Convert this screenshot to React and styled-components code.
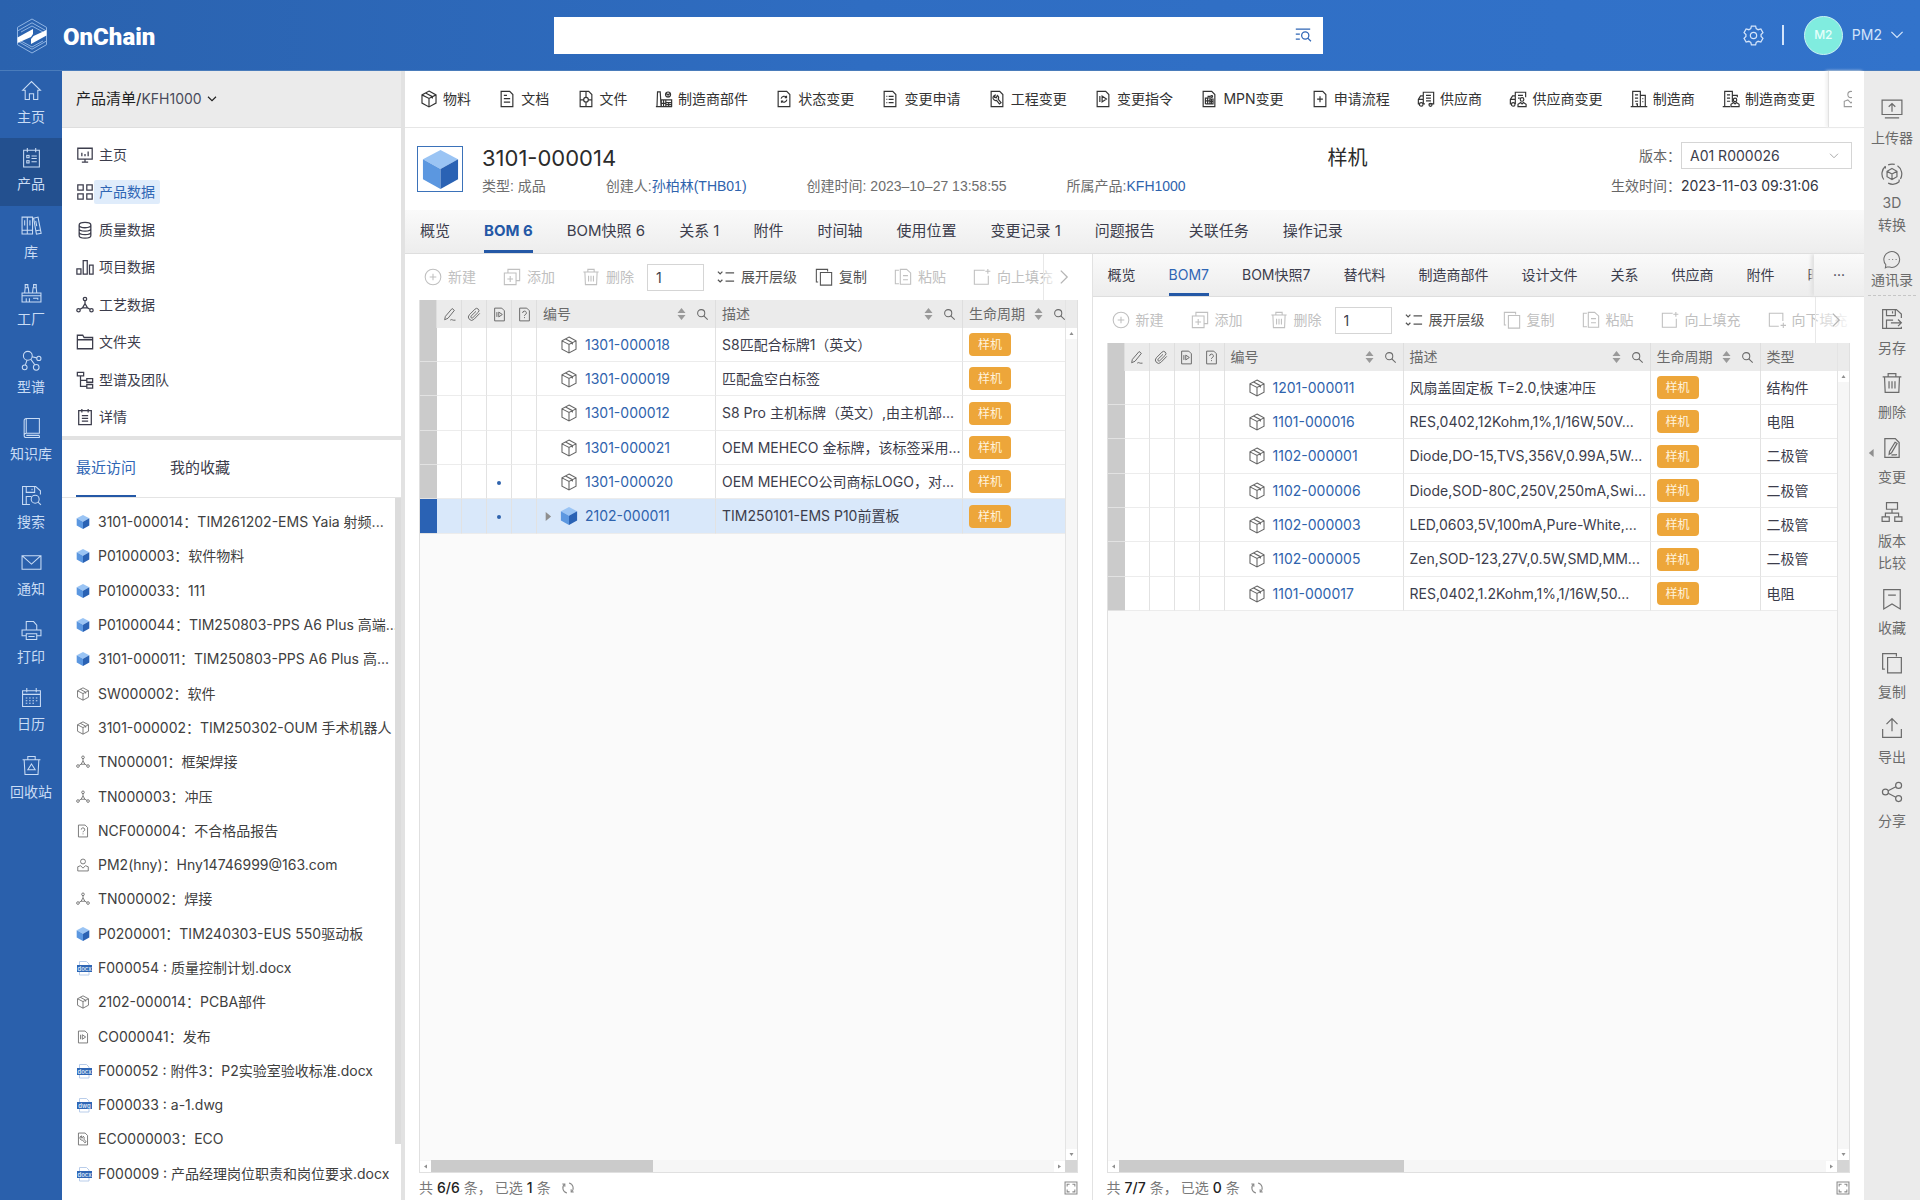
// App.jsx
import React from "react";
import styled, { createGlobalStyle } from "styled-components";

const GlobalStyle = createGlobalStyle`
  * {
    box-sizing: border-box;
  }

  body {
    margin: 0;
    background: #fff;
    color: #3c3d4c;
    font-family: Inter, "Noto Sans CJK SC", sans-serif;
    font-size: 14px;
    line-height: 20px;
  }

  ul {
    list-style: none;
    margin: 0;
    padding: 0;
  }

  button,
  input,
  select {
    font: inherit;
    color: inherit;
  }

  button {
    background: none;
    border: 0;
    padding: 0;
  }

  a {
    color: inherit;
    text-decoration: none;
  }
`;

/* ---------- icons ---------- */

const page = <path d="M3.5 1.5h9.5l3.5 3.5v13.5h-13z" />;

const ICONS = {
  cube: (
    <path d="M10 1.2l7.8 4.2v9.2L10 18.8l-7.8-4.2V5.4zM2.2 5.4L10 9.4l7.8-4M10 9.4v9.4M6.2 3.3l7.6 4.1v2" />
  ),
  docText: (
    <>
      {page}
      <path d="M6.5 6H10M6.5 9.5h7M6.5 13.5h7" />
    </>
  ),
  docFile: (
    <>
      {page}
      <path d="M10 1.5v6.5M10 13.5v5M3.5 11h4M12.5 11h4" />
      <circle cx="10" cy="10.8" r="2.6" />
    </>
  ),
  part: (
    <>
      <path d="M1 18.5h18M2.2 18.5L2.8 2h3l1 16.5M7 18.5V11h5v7.5M12 14h6.5v4.5M9.5 11v7.5M15.2 14v4.5M7 14.8h5M12 16.2h6.5M12 11h6.5v3" />
      <circle cx="14.5" cy="5" r="2.8" />
      <path d="M14.5 5v3M12 4l2.5 1L17 4" />
    </>
  ),
  docSync: (
    <>
      {page}
      <path d="M6.8 9.5A3.4 3.4 0 0 1 12.8 8.3M13.2 10.8a3.4 3.4 0 0 1-6 1.5M12.8 6.5v2h-2M7.2 14.2v-2h2" />
    </>
  ),
  docList: (
    <>
      {page}
      <path d="M6 7h1M8.5 7H14M6 10.5h1M8.5 10.5H14M6 14h1M8.5 14H14" />
    </>
  ),
  docWrench: (
    <>
      {page}
      <path d="M8 5.5a3.2 3.2 0 0 0-2.2 4.3A3.2 3.2 0 0 0 9.5 11.6l3.2 3.9 1.8-1.5-3.2-3.8A3.2 3.2 0 0 0 10.4 6L9.2 8.6 7.3 8.2z" />
    </>
  ),
  docPlay: (
    <>
      {page}
      <path d="M6.5 6.8v6.4M9 6.8v6.4l4.8-3.2z" />
    </>
  ),
  docMpn: (
    <>
      {page}
      <path d="M6 15.5V9h3V7h2v8.5M6 15.5h8.5V10H11M6 12h5M11 12.7h3.5M8.5 9v6.5M12.7 10v5.5" />
      <circle cx="13" cy="7.3" r="1" />
    </>
  ),
  docPlus: (
    <>
      {page}
      <path d="M10 7v6.5M6.8 10.2h6.4" />
    </>
  ),
  docHelp: (
    <>
      {page}
      <path d="M7.5 8a2.5 2.5 0 1 1 3.4 2.3c-.7.3-.9.6-.9 1.5M10 13.5v1.3" />
    </>
  ),
  docEdit: (
    <>
      {page}
      <path d="M12.8 4.8l1.8 1-5 8.6-2.2 1.3.3-2.5zM9.5 16.5c2-1 2.5.6 5-.6" />
    </>
  ),
  truck: (
    <>
      <path d="M7 15.5h1.8M13.2 15.5h5.3v-13H7v13M7 6.5H4l-2.5 4v5h1M7 10.5H1.5M10 6h5.5M10 9h5.5M10 12h5.5" />
      <circle cx="4.7" cy="16" r="2" />
      <circle cx="15" cy="16.5" r="1.7" />
    </>
  ),
  truckUser: (
    <>
      <path d="M18.5 8V2.5H7v13M7 6.5H4l-2.5 4v5h1M7 10.5H1.5M10 6h5.5M10 9h2" />
      <circle cx="4.7" cy="16" r="2" />
      <circle cx="14.5" cy="10.5" r="2" />
      <path d="M10 18.5v-2.7l3-1.8 1.5 1.5L16 14l3 1.8v2.7z" />
    </>
  ),
  building: (
    <path d="M.8 18.5h18.4M3 18.5v-17h8.5v17M11.5 6H17v12.5M5.5 5.5H9M5.5 9H9M5.5 12.5H9M13.8 9.5h1M13.8 13h1M6.5 15.5h1.7v3" />
  ),
  buildingUser: (
    <>
      <path d="M.8 18.5H9M3 18.5v-17h8.5v12M11.5 6H17v2M5.5 5.5H9M5.5 9H9M5.5 12.5H9" />
      <circle cx="14.5" cy="11" r="1.9" />
      <path d="M10 18.5v-2.7l3-1.8 1.5 1.5L16 14l3 1.8v2.7z" />
    </>
  ),
  home: <path d="M1.5 9.8L10 1.5l8.5 8.3H16v8.7h-4V13H8v5.5H4V9.8z" />,
  clipboard: (
    <>
      <path d="M2.5 3h15v16h-15zM6 1v4M14 1v4M10 8.5h5M10 11h5M10 14h5" />
      <rect x="5.5" y="8" width="2.2" height="2.2" />
      <rect x="5.5" y="13" width="2.2" height="2.2" />
    </>
  ),
  books: (
    <path d="M1 2h5v16H1zM6 2h5v16H6zM12 3l4.2-1 3 15.5-4.5.8zM1 14.5h10M3.5 5v5M8.5 5v5M14 5.5l1 5M14.3 15l4.2-.8" />
  ),
  factory: (
    <path d="M1 19v-8.5h18V19zM3.5 10.5l.5-5h3l.5 5M11 10.5l.5-5h3l.5 5M4 5.5v-3h2.5v3M12 5.5v-3h2.5v3M1 13h18M5 15.5V19M8 15.5V19M11.5 15.5H16V17" />
  ),
  molecule: (
    <>
      <circle cx="6.5" cy="5.5" r="4.2" />
      <circle cx="17" cy="8" r="2" />
      <circle cx="3.5" cy="16.5" r="2.3" />
      <circle cx="14.5" cy="16.5" r="2.7" />
      <path d="M10.5 6.5l4.5 1M5.7 9.6l-1.5 4.6M9.2 8.7l4 5.4" />
    </>
  ),
  book: (
    <path d="M5 1.5h12.5v14H5a2 2 0 0 0 0 4h12.5v-2M3 17.5v-14a2 2 0 0 1 2-2v14M17.5 17.5H5" />
  ),
  saveSearch: (
    <>
      <path d="M8.5 18.5h-7v-17H14L18.5 5.5V9M5 1.5V7h8V1.5M10.5 3.5V5M5 18.5V11h5" />
      <circle cx="13.5" cy="13.5" r="3.8" />
      <path d="M16.2 16.2L19 19" />
    </>
  ),
  mail: <path d="M1 3.5h18v13H1zM1 3.5l9 8 9-8" />,
  printer: (
    <path d="M5 9.5v-8h7L15 5v4.5M5 15H1V9.5h18V15h-4M5 13h10v5.5H5zM7 15.8h6" />
  ),
  calendar: (
    <>
      <path d="M1.5 3.5h17v15h-17zM1.5 7h17M5.5 1v4M14.5 1v4" />
      <path d="M4.5 10.5h12M4.5 13h12M4.5 15.5h9" strokeDasharray="1.5 1.7" />
    </>
  ),
  recycle: (
    <path d="M1.5 4.5h17M6.5 4.5v-3h7v3M3 4.5l.8 14h12.4l.8-14M10 8.5l3.5 5.5h-7z" />
  ),
  board: (
    <path d="M2 2.5h16v12H2zM10 14.5v3M6.5 18h7M6.5 7.5v4M10 9v2.5M13.5 6v5.5" />
  ),
  tiles: <path d="M2 2h6v6H2zM12 2h6v6h-6zM2 12h6v6H2zM12 12h6v6h-6z" />,
  database: (
    <path d="M3.5 4.5c0-4 13-4 13 0s-13 4-13 0zM3.5 4.5V16c0 4 13 4 13 0V4.5M3.5 8.3c0 4 13 4 13 0M3.5 12.2c0 4 13 4 13 0" />
  ),
  bars: <path d="M1 12h4.5v6H1zM8 3h4.5v15H8zM15 8h4v10h-4z" />,
  process: (
    <>
      <circle cx="10" cy="3.3" r="1.9" />
      <circle cx="2.8" cy="15.8" r="1.9" />
      <circle cx="17.2" cy="15.8" r="1.9" />
      <path d="M10 5.2v3.3l2.8 4.7H7.2L10 8.5M7.2 13.2l-2.7 1.6M12.8 13.2l2.7 1.6" />
    </>
  ),
  folder: <path d="M1.5 17.5v-15h6L9 5h9.5v12.5zM1.5 7.5h17" />,
  hierarchy: (
    <path d="M1.5 1.5h7v4h-7zM12 8.5h6.5v4H12zM12 15h6.5v4H12zM5 5.5V17h7M5 10.5h7" />
  ),
  detail: (
    <path d="M3 3h14v15.5H3zM6.5 1v4M13.5 1v4M6.5 8.5h7M6.5 11.5h7M6.5 14.5h7" />
  ),
  person: (
    <>
      <circle cx="10" cy="5" r="3.5" />
      <path d="M2.5 18.5v-6l4-1.5 3.5 3.5 3.5-3.5 4 1.5v6z" />
    </>
  ),
  plusCircle: (
    <>
      <circle cx="10" cy="10" r="8.7" />
      <path d="M10 6.3v7.4M6.3 10h7.4" />
    </>
  ),
  addCopy: (
    <path d="M5.5 5V1.5h13V14H15M1.5 5.5h13v13h-13zM8 9v6.5M4.8 12.2h6.4" />
  ),
  trash: (
    <path d="M1.5 4.5h17M6.5 4.5v-3h7v3M3.2 4.5l.6 14h12.4l.6-14M7.3 8.5V15M10 8.5V15M12.7 8.5V15" />
  ),
  levels: (
    <path d="M1 4l2.5 2.5L6 4M1 13l2.5 2.5L6 13M9.5 5.5H19M9.5 14.5H19" />
  ),
  copy: <path d="M3.5 15.5h-2v-14H14V4M6 5h12.5v14H6z" />,
  paste: (
    <path d="M5.5 17.5h-4v-15h4M7 4V1.5h7l4.5 4V18H7zM10 8.5h5.5M10 13h5.5" />
  ),
  fillUp: <path d="M13 2.5H1.5V18H17V8.5M16.5 1v5.5M13.7 3.7h5.6" />,
  fillDown: <path d="M12 17H1.5V2.5h15V11M17 13v6M14 16h6" />,
  pencil: (
    <path d="M13.5 2l3 2.5L8 15l-4.5 2 1-4.500zM11 17.5c2-2 3 1 7 0" />
  ),
  clip: (
    <path d="M17 8.500l-7.800 8a4.300 4.300 0 0 1-6-6.200l7.500-7.500a3 3 0 0 1 4.300 4.200l-7.300 7.300a1.500 1.500 0 0 1-2.200-2.200L12 5.800" />
  ),
  search: (
    <>
      <circle cx="8" cy="8" r="5.5" />
      <path d="M12 12l6 6" />
    </>
  ),
  listSearch: (
    <>
      <path d="M2 3.5h16M2 9h4.5M2 14.5h4.5" />
      <circle cx="12.5" cy="10.5" r="4" />
      <path d="M15.3 13.5l3.5 3.5" />
    </>
  ),
  down: <path d="M2 5.5l8 8 8-8" />,
  right: <path d="M6 2l8 8-8 8" />,
  refresh: (
    <path d="M8.5 17.3A7.4 7.4 0 0 1 5.5 4.2M11.5 2.7a7.4 7.4 0 0 1 3 13.1M5.5 8.2v-4H1.8M14.5 11.8v4h3.7" />
  ),
  expand: (
    <path d="M1.5 1.5h17v17h-17zM4.5 8V4.5H8M12 4.5h3.5V8M15.5 12v3.5H12M8 15.5H4.5V12" />
  ),
  upload: <path d="M1 2h18v13H1zM3.5 18h13M10 12.5V5M7 8l3-3 3 3" />,
  view3d: (
    <>
      <path d="M10 5l4.5 2.5v5L10 15l-4.5-2.5v-5zM5.5 7.5L10 10l4.5-2.5M10 10v5" />
      <path d="M4 3A9 9 0 0 0 2.5 15M6.5 18.3A9 9 0 0 0 16.5 17M17.7 14.5A9 9 0 0 0 15 2.6M12.5 1.3A9 9 0 0 0 6.5 1.7M16.5 17v-2M4 3v2" />
    </>
  ),
  chat: (
    <path d="M4 18l-1.5.8L3 15.5A8.3 8.3 0 1 1 7 18zM6 10h1M9.7 10h1M13.3 10h1" />
  ),
  saveAs: (
    <path d="M18.5 9V5.5L14 1.5H1.5v17h17V17M5 1.5V7h8V1.5M10.5 3v2M5 18.5V11h6M9 13.5h9.5M15.5 10.5l3 3-3 3" />
  ),
  compare: (
    <path d="M5 1.5h10v6H5zM1 14.5h6.5v4H1zM12.5 14.5H19v4h-6.5zM10 7.5V11M4 14.5V11h12v3.5" />
  ),
  bookmark: <path d="M2.5 1.5h15V19L10 14.5 2.5 19zM6.5 6.5h7" />,
  exportUp: <path d="M1.5 11v7.5h17V11M10 13V1.5M5 6.500l5-5 5 5" />,
  share: (
    <>
      <circle cx="4" cy="10" r="2.7" />
      <circle cx="16" cy="4" r="2.7" />
      <circle cx="16" cy="16" r="2.7" />
      <path d="M6.5 8.8l7-3.6M6.5 11.2l7 3.6" />
    </>
  ),
  gear: (
    <>
      <circle cx="10" cy="10" r="3" />
      <path d="M8 1h4l.6 2.5 1.8 1L17 3.8l2 3.4-1.8 1.9v1.8l1.8 1.9-2 3.4-2.6-.7-1.8 1L12 19H8l-.6-2.5-1.8-1-2.6.7-2-3.4 1.8-1.9V9.1L1 7.2l2-3.4 2.6.7 1.8-1z" />
    </>
  ),
};

const Svg = styled.svg`
  width: ${({ $size }) => $size}px;
  height: ${({ $size }) => $size}px;
  flex: none;
  display: block;
  fill: none;
  stroke: currentColor;
`;

const Icon = ({ name, size = 18, stroke = 1.2 }) => (
  <Svg viewBox="0 0 20 20" $size={size} strokeWidth={stroke} aria-hidden="true">
    {ICONS[name]}
  </Svg>
);

const BlueCube = ({ size = 14 }) => (
  <Svg viewBox="0 0 20 20" $size={size} aria-hidden="true">
    <path d="M10 0l9 4.8-9 5-9-5z" fill="#9ac4f4" stroke="none" />
    <path d="M1 4.8l9 5V20l-9-5z" fill="#5b97e0" stroke="none" />
    <path d="M19 4.8l-9 5V20l9-5z" fill="#2a62b4" stroke="none" />
  </Svg>
);

const FileBadge = ({ ext }) => (
  <Svg viewBox="0 0 16 16" $size={16} aria-hidden="true">
    <path d="M3.5 15V1.5h7L13 4v11z" stroke="#b9cdea" fill="#fff" />
    <rect x="1" y="5" width="15" height="7" fill="#2f66b5" stroke="none" />
    <text
      x="8.5"
      y="10.5"
      fontSize="6"
      fontWeight="600"
      textAnchor="middle"
      fill="#dce8f8"
      stroke="none"
    >
      {ext}
    </text>
  </Svg>
);

const RowIcon = ({ kind, size = 14 }) => {
  if (kind === "blue") return <BlueCube size={size} />;
  if (kind === "docx" || kind === "dwg") return <FileBadge ext={kind} />;
  return <Icon name={kind} size={size} />;
};

const Logo = () => (
  <svg width="32" height="36" viewBox="0 0 32 36" aria-hidden="true">
    <g fill="none" stroke="#8fb4e3" strokeWidth="1">
      <path d="M16 1l14.5 8.3v17.4L16 35 1.5 26.7V9.3z" />
      <path d="M1.5 13L16 4.8 30.5 13M1.5 23L16 31.2 30.5 23M5 14l11-6 11 6M5 23l11 6 11-6" />
    </g>
    <path d="M1.5 19.5L17 11v5l-2 3-13.5 6z" fill="#fff" />
    <path d="M30.5 12v5.5L15 26v-5l2.5-3z" fill="#fff" />
  </svg>
);

/* ---------- shell ---------- */

const Shell = styled.div`
  height: 100vh;
  display: flex;
  flex-direction: column;
  overflow: hidden;
`;

const TopBar = styled.header`
  flex: none;
  height: 71px;
  display: grid;
  grid-template-columns: 554fr 769fr 597fr;
  align-items: center;
  background: linear-gradient(90deg, #2a62ae, #2f6dc2 45%, #3273cb);
  border-bottom: 1px solid #4a7cbb;
`;

const Brand = styled.div`
  display: flex;
  align-items: center;
  gap: 15px;
  padding: 2px 0 0 16px;
`;

const BrandName = styled.span`
  padding-top: 2px;
  color: #fff;
  font-family: Roboto, sans-serif;
  font-size: 24px;
  font-weight: 900;
  line-height: 34px;
`;

const SearchBox = styled.form`
  display: flex;
  align-items: center;
  height: 37px;
  padding-right: 11px;
  background: #fff;
  color: #2f66b5;
`;

const SearchInput = styled.input`
  flex: 1;
  height: 100%;
  border: 0;
  outline: 0;
  padding: 0 12px;
  background: none;
`;

const UserArea = styled.div`
  display: flex;
  align-items: center;
  justify-content: flex-end;
  padding-right: 16px;
  color: #d3e4fa;
`;

const Separator = styled.span`
  width: 2px;
  height: 20px;
  margin: 0 20px 0 18px;
  background: #d3e4fa;
`;

const Avatar = styled.span`
  width: 39px;
  height: 39px;
  display: flex;
  align-items: center;
  justify-content: center;
  border: 1px solid #c9f3f3;
  border-radius: 50%;
  background: #80ecdf;
  color: #e6fffb;
  font-size: 12px;
  font-weight: 500;
`;

const UserButton = styled.button`
  display: flex;
  align-items: center;
  gap: 8px;
  margin-left: 9px;
`;

const Body = styled.div`
  flex: 1;
  min-height: 0;
  display: flex;
`;

/* ---------- left navigation ---------- */

const Nav = styled.nav`
  flex: 0 0 62px;
  background: #2a60ac;
`;

const NavList = styled.ul`
  height: 742px;
  display: flex;
  flex-direction: column;
`;

const NavItem = styled.li`
  flex: 1;
  display: flex;
  background: ${({ $active }) => ($active ? "#23508f" : "none")};
`;

const NavLink = styled.a`
  flex: 1;
  display: flex;
  flex-direction: column;
  align-items: center;
  padding-top: 9px;
  gap: 6px;
  color: #c9dcf5;
`;

/* ---------- side panel ---------- */

const Side = styled.aside`
  flex: 0 0 343px;
  min-width: 0;
  display: flex;
  flex-direction: column;
  border-right: 4px solid #e2e2e2;
`;

const Crumb = styled.button`
  flex: none;
  height: 57px;
  display: flex;
  align-items: center;
  padding: 0 14px;
  background: #ebebeb;
  border-bottom: 1px solid #dedede;
  color: #1f1f1f;
  font-size: 15px;
`;

const CrumbName = styled.span`
  margin-right: 5px;
  color: #4a4b5c;
  font-size: 14px;
`;

const Menu = styled.ul`
  flex: none;
  height: 308px;
  padding-top: 8px;
  display: flex;
  flex-direction: column;
`;

const MenuItem = styled.li`
  flex: 1;
  display: flex;
  align-items: center;
  padding-left: 14px;
`;

const MenuLink = styled.a`
  padding: 2px 5px;
  border-radius: 2px;
  background: ${({ $active }) => ($active ? "#dfecfb" : "none")};
  color: ${({ $active }) => ($active ? "#2f66b5" : "#3c3d4c")};
`;

const SideTabs = styled.div`
  flex: none;
  height: 62px;
  display: flex;
  gap: 34px;
  padding: 0 14px;
  border-top: 4px solid #e2e2e2;
  border-bottom: 1px solid #e4e4e4;
`;

const SideTab = styled.button`
  border-bottom: 2px solid ${({ $active }) => ($active ? "#2458a6" : "transparent")};
  color: ${({ $active }) => ($active ? "#2f66b5" : "#3c3d4c")};
  font-size: 15px;
`;

const RecentArea = styled.div`
  flex: 1;
  min-height: 0;
  display: flex;
`;

const RecentList = styled.ul`
  flex: 1;
  min-width: 0;
  height: 693px;
  padding-top: 7px;
  display: flex;
  flex-direction: column;
`;

const RecentItem = styled.li`
  flex: 1;
  display: grid;
  grid-template-columns: 16px minmax(0, 1fr);
  gap: 6px;
  align-items: center;
  padding-left: 14px;
  color: #666;
`;

const RecentLink = styled.a`
  white-space: nowrap;
  color: #404040;
`;

const SideThumb = styled.span`
  flex: none;
  width: 6px;
  height: 92%;
  background: #dcdcdc;
`;

/* ---------- main column ---------- */

const Main = styled.main`
  flex: 1;
  min-width: 0;
  display: flex;
  flex-direction: column;
`;

const ActionBar = styled.div`
  flex: none;
  height: 57px;
  display: flex;
  border-bottom: 1px solid #e6e6e6;
`;

const ActionList = styled.div`
  flex: 1;
  min-width: 0;
  display: flex;
  align-items: center;
  justify-content: space-between;
  padding: 0 13px 0 15px;
  overflow: hidden;
`;

const ActionButton = styled.button`
  flex: none;
  display: flex;
  align-items: center;
  gap: 5px;
  color: #333;
`;

const ActionMore = styled.div`
  flex: 0 0 36px;
  display: flex;
  align-items: center;
  padding-left: 13px;
  overflow: hidden;
  border-left: 1px solid #e2e2e2;
  box-shadow: -2px 0 3px #f0f0f0;
  color: #999;
`;

const MoreClip = styled.span`
  width: 10px;
  overflow: hidden;
`;

const ItemHead = styled.section`
  flex: none;
  height: 82px;
  display: flex;
  padding: 14px 12px 0 12px;
`;

const Thumb = styled.div`
  flex: none;
  width: 46px;
  height: 46px;
  margin-top: 4px;
  display: flex;
  align-items: center;
  justify-content: center;
  border: 1px solid #3b72b9;
`;

const HeadText = styled.div`
  flex: 1;
  margin-left: 19px;
`;

const TitleRow = styled.div`
  display: grid;
  grid-template-columns: 847fr 284fr;
  color: #2b2b2b;
  font-size: 20px;
  line-height: 32px;
`;

const Title = styled.h1`
  margin: 0;
  font-size: 22px;
  font-weight: 400;
`;

const Meta = styled.div`
  display: flex;
  gap: 60px;
  color: #6e6e6e;
  font-family: "Liberation Sans", "Noto Sans CJK SC", sans-serif;
  line-height: 24px;
`;

const MetaLink = styled.a`
  color: #2f63ad;
`;

const Version = styled.div`
  display: grid;
  grid-template-columns: auto 171px;
  grid-auto-rows: 27px;
  gap: 3px 0;
  align-items: center;
  color: #666;
`;

const VersionLabel = styled.label`
  text-align: right;
`;

const SelectWrap = styled.span`
  height: 27px;
  display: grid;
  grid-template-columns: 1fr 22px;
  align-items: center;
  border: 1px solid #d5d5d5;
  color: #a0a0a0;
`;

const Select = styled.select`
  grid-area: 1 / 1 / 2 / 3;
  height: 25px;
  padding: 0 8px;
  appearance: none;
  border: 0;
  background: none;
  color: #3c3d4c;
`;

const SelectArrow = styled.span`
  grid-area: 1 / 2;
  pointer-events: none;
`;

const VersionTime = styled.span`
  color: #33343f;
`;

const MainTabs = styled.div`
  flex: none;
  height: 44px;
  display: flex;
  gap: 34px;
  padding-left: 15px;
  background: linear-gradient(#fafafa, #ededed);
  border-bottom: 1px solid #dedede;
`;

const MainTab = styled.button`
  flex: none;
  padding-top: 2px;
  border-bottom: 3px solid ${({ $active }) => ($active ? "#2458a6" : "transparent")};
  color: ${({ $active }) => ($active ? "#2458a6" : "#3c3d4c")};
  font-size: 15px;
  font-weight: ${({ $active }) => ($active ? 700 : 400)};
`;

const Panes = styled.div`
  flex: 1;
  min-height: 0;
  display: flex;
`;

const Pane = styled.section`
  flex: ${({ $grow }) => $grow} 1 0;
  min-width: 0;
  display: flex;
  flex-direction: column;
  border-left: ${({ $divided }) => ($divided ? "1px solid #e2e2e2" : "0")};
`;

const SubTabs = styled.div`
  flex: none;
  height: 43px;
  display: flex;
  background: linear-gradient(#fafafa, #ededed);
  border-bottom: 1px solid #dedede;
`;

const SubTabList = styled.div`
  flex: 1;
  min-width: 0;
  display: flex;
  gap: 33px;
  padding-left: 15px;
  overflow: hidden;
`;

const SubTab = styled.button`
  flex: none;
  padding-top: 2px;
  border-bottom: 3px solid ${({ $active }) => ($active ? "#2458a6" : "transparent")};
  color: ${({ $active }) => ($active ? "#2f66b5" : "#3c3d4c")};
`;

const SubTabMore = styled.button`
  flex: 0 0 50px;
  box-shadow: -3px 0 3px #e2e2e2;
`;

const Tools = styled.div`
  position: relative;
  flex: none;
  height: 46px;
  display: flex;
  align-items: center;
  padding-left: 19px;
  overflow: hidden;
`;

const Tool = styled.button`
  flex: none;
  display: flex;
  align-items: center;
  gap: 6px;
  margin-right: ${({ $gap = 27 }) => $gap}px;
  color: ${({ disabled }) => (disabled ? "#c0c0c0" : "#555")};
`;

const LevelInput = styled.input`
  flex: none;
  width: 57px;
  height: 27px;
  margin: 0 13px 0 0;
  padding: 0 8px;
  border: 1px solid #d5d5d5;
`;

/* sits over the buttons that do not fit */
const ToolFade = styled.div`
  position: absolute;
  top: 0;
  right: 0;
  bottom: 0;
  width: 49px;
  display: flex;
  align-items: center;
  padding-left: 12px;
  border-left: 1px solid #e8e8e8;
  background: linear-gradient(90deg, rgba(255, 255, 255, 0.3), #fff ${({ $solid }) => $solid});
  color: #b5b5b5;
`;

/* ---------- data grid ---------- */

const Grid = styled.div`
  flex: 1;
  min-height: 0;
  display: grid;
  grid-template-columns: 1fr 12px;
  grid-template-rows: 1fr 12px;
  margin: 0 14px;
  border: 1px solid #e0e0e0;
  border-top: 0;
`;

const GridView = styled.div`
  min-width: 0;
  overflow: hidden;
  background: #fafafa;
`;

const Table = styled.table`
  width: ${({ $width }) => $width}px;
  table-layout: fixed;
  border-collapse: separate;
  border-spacing: 0;
`;

const Th = styled.th`
  height: 28px;
  padding: 0 6px;
  background: ${({ $mark }) => ($mark ? "#cbcbcb" : "#ebebeb")};
  border-right: 1px solid #dedede;
  color: #6a6a6a;
  font-weight: 400;
  text-align: left;
`;

const HeadCell = styled.div`
  display: flex;
  align-items: center;
  justify-content: ${({ $center }) => ($center ? "center" : "flex-start")};
`;

const HeadLabel = styled.span`
  flex: 1;
  white-space: nowrap;
`;

const HeadTools = styled.span`
  display: flex;
  align-items: center;
  gap: 10px;
`;

const Tr = styled.tr`
  height: 34px;
  background: ${({ $selected }) => ($selected ? "#d9e8fa" : "#fff")};

  &:nth-child(3n) {
    height: 35px;
  }
`;

const Td = styled.td`
  padding: 0 6px;
  border-right: 1px solid #e2e2e2;
  border-bottom: 1px solid #ececec;
  overflow: hidden;
  white-space: nowrap;
  text-align: ${({ $center }) => ($center ? "center" : "left")};
`;

const MarkTd = styled.td`
  padding: 0;
  background: ${({ $selected }) => ($selected ? "#2a62b4" : "#cbcbcb")};
  border-bottom: 1px solid #e2e2e2;
`;

const Code = styled.div`
  display: grid;
  grid-template-columns: 10px 18px auto;
  align-items: center;
  gap: 7px;
  color: #666;
`;

const CodeLink = styled.a`
  color: #2f63ad;
`;

const Dot = styled.span`
  display: inline-block;
  width: 4px;
  height: 4px;
  border-radius: 50%;
  background: #2f63ad;
  vertical-align: middle;
`;

const Badge = styled.span`
  display: inline-block;
  padding: 0 9px;
  border-radius: 4px;
  background: #eda63a;
  color: #fff3dd;
  font-size: 12px;
  line-height: 23px;
  vertical-align: middle;
`;

const Track = styled.div`
  display: flex;
  flex-direction: column;
  justify-content: space-between;
  align-items: center;
  background: #f6f6f6;
  border-left: 1px solid #e4e4e4;
`;

const TrackHead = styled.span`
  width: 100%;
  height: 28px;
  background: #ebebeb;
`;

const HTrack = styled.div`
  display: flex;
  align-items: center;
  background: #f6f6f6;
`;

const HThumb = styled.span`
  height: 100%;
  width: ${({ $width }) => $width};
  background: #cbcbcb;
`;

const ScrollArrow = styled.span`
  width: 11px;
  height: 11px;
  margin-left: ${({ $end }) => ($end ? "auto" : "0")};
  margin-bottom: ${({ $push }) => ($push ? "auto" : "0")};
  display: flex;
  align-items: center;
  justify-content: center;
  background: #fff;
`;

const Corner = styled.span`
  background: #d5d5d5;
`;

const Footer = styled.footer`
  flex: none;
  height: 27px;
  display: flex;
  align-items: center;
  padding: 2px 14px 0;
  color: #7a7a7a;
`;

const Count = styled.strong`
  margin: 0 4px;
  color: #222;
  font-weight: 500;
`;

const Picked = styled.span`
  margin-left: 3px;
`;

const FooterIcon = styled.button`
  margin-left: ${({ $end }) => ($end ? "auto" : "10px")};
  color: #8a8a8a;
`;

/* ---------- right rail ---------- */

const Rail = styled.aside`
  position: relative;
  flex: 0 0 56px;
  display: flex;
  flex-direction: column;
  padding: 26px 4px 0;
  background: #ebebeb;
  color: #6b6b6b;
`;

const RailGroup = styled.div`
  height: 194px;
  display: flex;
  flex-direction: column;
  justify-content: space-between;
  align-items: center;
`;

const RailTools = styled(RailGroup)`
  height: 537px;
  margin-top: 4px;
  padding-top: 11px;
  border-top: 1px dashed #c6c6c6;
`;

const RailButton = styled.button`
  display: flex;
  flex-direction: column;
  align-items: center;
  gap: ${({ $compact }) => ($compact ? 0 : 6)}px;
  line-height: 22px;
`;

const RailIcon = styled.span`
  height: ${({ $compact }) => ($compact ? 20 : 24)}px;
  display: flex;
  align-items: center;
`;

const RailCaret = styled.span`
  position: absolute;
  top: 371px;
  left: 4px;
`;

/* ---------- data ---------- */

const navItems = [
  ["home", "主页"],
  ["clipboard", "产品"],
  ["books", "库"],
  ["factory", "工厂"],
  ["molecule", "型谱"],
  ["book", "知识库"],
  ["saveSearch", "搜索"],
  ["mail", "通知"],
  ["printer", "打印"],
  ["calendar", "日历"],
  ["recycle", "回收站"],
];

const menuItems = [
  ["board", "主页"],
  ["tiles", "产品数据"],
  ["database", "质量数据"],
  ["bars", "项目数据"],
  ["process", "工艺数据"],
  ["folder", "文件夹"],
  ["hierarchy", "型谱及团队"],
  ["detail", "详情"],
];

const recentItems = [
  ["blue", "3101-000014：TIM261202-EMS Yaia 射频..."],
  ["blue", "P01000003：软件物料"],
  ["blue", "P01000033：111"],
  ["blue", "P01000044：TIM250803-PPS A6 Plus 高端..."],
  ["blue", "3101-000011：TIM250803-PPS A6 Plus 高..."],
  ["cube", "SW000002：软件"],
  ["cube", "3101-000002：TIM250302-OUM 手术机器人"],
  ["process", "TN000001：框架焊接"],
  ["process", "TN000003：冲压"],
  ["docHelp", "NCF000004：不合格品报告"],
  ["person", "PM2(hny)：Hny14746999@163.com"],
  ["process", "TN000002：焊接"],
  ["blue", "P0200001：TIM240303-EUS 550驱动板"],
  ["docx", "F000054 : 质量控制计划.docx"],
  ["cube", "2102-000014：PCBA部件"],
  ["docPlay", "CO000041：发布"],
  ["docx", "F000052 : 附件3：P2实验室验收标准.docx"],
  ["dwg", "F000033 : a-1.dwg"],
  ["docWrench", "ECO000003：ECO"],
  ["docx", "F000009 : 产品经理岗位职责和岗位要求.docx"],
];

const actions = [
  ["cube", "物料"],
  ["docText", "文档"],
  ["docFile", "文件"],
  ["part", "制造商部件"],
  ["docSync", "状态变更"],
  ["docList", "变更申请"],
  ["docWrench", "工程变更"],
  ["docPlay", "变更指令"],
  ["docMpn", "MPN变更"],
  ["docPlus", "申请流程"],
  ["truck", "供应商"],
  ["truckUser", "供应商变更"],
  ["building", "制造商"],
  ["buildingUser", "制造商变更"],
];

const mainTabs = [
  "概览",
  "BOM 6",
  "BOM快照 6",
  "关系 1",
  "附件",
  "时间轴",
  "使用位置",
  "变更记录 1",
  "问题报告",
  "关联任务",
  "操作记录",
];

const subTabs = [
  "概览",
  "BOM7",
  "BOM快照7",
  "替代料",
  "制造商部件",
  "设计文件",
  "关系",
  "供应商",
  "附件",
  "时间轴",
];

const leftRows = [
  { code: "1301-000018", desc: "S8匹配合标牌1（英文）" },
  { code: "1301-000019", desc: "匹配盒空白标签" },
  { code: "1301-000012", desc: "S8 Pro 主机标牌（英文）,由主机部..." },
  { code: "1301-000021", desc: "OEM MEHECO 金标牌，该标签采用..." },
  { code: "1301-000020", desc: "OEM MEHECO公司商标LOGO，对...", changed: true },
  {
    code: "2102-000011",
    desc: "TIM250101-EMS P10前置板",
    changed: true,
    selected: true,
  },
];

const rightRows = [
  { code: "1201-000011", desc: "风扇盖固定板 T=2.0,快速冲压", type: "结构件" },
  { code: "1101-000016", desc: "RES,0402,12Kohm,1%,1/16W,50V...", type: "电阻" },
  { code: "1102-000001", desc: "Diode,DO-15,TVS,356V,0.99A,5W...", type: "二极管" },
  { code: "1102-000006", desc: "Diode,SOD-80C,250V,250mA,Swi...", type: "二极管" },
  { code: "1102-000003", desc: "LED,0603,5V,100mA,Pure-White,...", type: "二极管" },
  { code: "1102-000005", desc: "Zen,SOD-123,27V,0.5W,SMD,MM...", type: "二极管" },
  { code: "1101-000017", desc: "RES,0402,1.2Kohm,1%,1/16W,50...", type: "电阻" },
];

const railTop = [
  ["upload", ["上传器"]],
  ["view3d", ["3D", "转换"]],
  ["chat", ["通讯录"]],
];

const railTools = [
  ["saveAs", ["另存"]],
  ["trash", ["删除"]],
  ["docEdit", ["变更"]],
  ["compare", ["版本", "比较"]],
  ["bookmark", ["收藏"]],
  ["copy", ["复制"]],
  ["exportUp", ["导出"]],
  ["share", ["分享"]],
];

/* ---------- parts ---------- */

const Triangle = ({ d, size = 5, color = "#8f8f8f" }) => (
  <svg width={size} height={size} viewBox="0 0 10 10" aria-hidden="true">
    <path d={d} fill={color} />
  </svg>
);

const SortIcon = () => (
  <svg width="9" height="14" viewBox="0 0 9 14" aria-hidden="true">
    <path d="M4.5 1l4 5h-8zM4.5 13l4-5h-8z" fill="#9a9a9a" />
  </svg>
);

const SortableHead = ({ label }) => (
  <HeadCell>
    <HeadLabel>{label}</HeadLabel>
    <HeadTools>
      <SortIcon />
      <Icon name="search" size={13} stroke={1.6} />
    </HeadTools>
  </HeadCell>
);

const ToolBar = ({ canCopy, solid }) => (
  <Tools>
    <Tool disabled>
      <Icon name="plusCircle" /> 新建
    </Tool>
    <Tool disabled>
      <Icon name="addCopy" /> 添加
    </Tool>
    <Tool disabled $gap={13}>
      <Icon name="trash" /> 删除
    </Tool>
    <LevelInput aria-label="展开层级数" defaultValue="1" />
    <Tool $gap={18}>
      <Icon name="levels" stroke={1.4} /> 展开层级
    </Tool>
    <Tool disabled={!canCopy}>
      <Icon name="copy" /> 复制
    </Tool>
    <Tool disabled>
      <Icon name="paste" /> 粘贴
    </Tool>
    <Tool disabled>
      <Icon name="fillUp" /> 向上填充
    </Tool>
    <Tool disabled>
      <Icon name="fillDown" /> 向下填充
    </Tool>
    <ToolFade $solid={solid}>
      <button aria-label="更多操作">
        <Icon name="right" size={16} stroke={1.6} />
      </button>
    </ToolFade>
  </Tools>
);

const DataGrid = ({ rows, showType, thumb }) => (
  <Grid>
    <GridView>
      <Table $width={showType ? 753 : 653}>
        <colgroup>
          <col width="17" />
          <col width="25" />
          <col width="25" />
          <col width="25" />
          <col width="25" />
          <col width="179" />
          <col width="247" />
          <col width="110" />
          {showType && <col width="100" />}
        </colgroup>
        <thead>
          <tr>
            <Th $mark />
            {["pencil", "clip", "docPlay", "docHelp"].map((name) => (
              <Th key={name}>
                <HeadCell $center>
                  <Icon name={name} size={15} stroke={1.3} />
                </HeadCell>
              </Th>
            ))}
            <Th>
              <SortableHead label="编号" />
            </Th>
            <Th>
              <SortableHead label="描述" />
            </Th>
            <Th>
              <SortableHead label="生命周期" />
            </Th>
            {showType && <Th>类型</Th>}
          </tr>
        </thead>
        <tbody>
          {rows.map(({ code, desc, type, changed, selected }) => (
            <Tr key={code} $selected={selected}>
              <MarkTd $selected={selected} />
              <Td />
              <Td />
              <Td $center>{changed && <Dot />}</Td>
              <Td />
              <Td>
                <Code>
                  {selected ? <Triangle size={9} d="M3 0l6 5-6 5z" /> : <span />}
                  <RowIcon kind={selected ? "blue" : "cube"} size={18} />
                  <CodeLink href="#">{code}</CodeLink>
                </Code>
              </Td>
              <Td>{desc}</Td>
              <Td>
                <Badge>样机</Badge>
              </Td>
              {showType && <Td>{type}</Td>}
            </Tr>
          ))}
        </tbody>
      </Table>
    </GridView>
    <Track>
      <TrackHead />
      <ScrollArrow $push>
        <Triangle d="M5 2l4 6H1z" />
      </ScrollArrow>
      <ScrollArrow>
        <Triangle d="M5 8l4-6H1z" />
      </ScrollArrow>
    </Track>
    <HTrack>
      <ScrollArrow>
        <Triangle d="M2 5l6-4v8z" />
      </ScrollArrow>
      <HThumb $width={thumb} />
      <ScrollArrow $end>
        <Triangle d="M8 5L2 1v8z" />
      </ScrollArrow>
    </HTrack>
    <Corner />
  </Grid>
);

const GridFooter = ({ total, picked }) => (
  <Footer>
    共<Count>{total}</Count>条，
    <Picked>已选</Picked>
    <Count>{picked}</Count>条
    <FooterIcon aria-label="刷新">
      <Icon name="refresh" size={14} stroke={1.5} />
    </FooterIcon>
    <FooterIcon $end aria-label="全屏">
      <Icon name="expand" size={14} stroke={1.5} />
    </FooterIcon>
  </Footer>
);

const RailEntry = ({ icon, lines }) => {
  const compact = icon === "chat";

  return (
    <RailButton $compact={compact}>
      <RailIcon $compact={compact}>
        <Icon name={icon} size={compact ? 19 : 22} stroke={1.1} />
      </RailIcon>
      <span>
        {lines.map((line) => (
          <div key={line}>{line}</div>
        ))}
      </span>
    </RailButton>
  );
};

const App = () => (
  <Shell>
    <GlobalStyle />
    <TopBar>
      <Brand>
        <Logo />
        <BrandName>OnChain</BrandName>
      </Brand>
      <SearchBox>
        <SearchInput aria-label="搜索" />
        <button type="button" aria-label="高级搜索">
          <Icon name="listSearch" stroke={1.4} />
        </button>
      </SearchBox>
      <UserArea>
        <button aria-label="设置">
          <Icon name="gear" size={21} />
        </button>
        <Separator />
        <Avatar>M2</Avatar>
        <UserButton>
          PM2 <Icon name="down" size={14} stroke={1.8} />
        </UserButton>
      </UserArea>
    </TopBar>

    <Body>
      <Nav>
        <NavList>
          {navItems.map(([icon, label]) => (
            <NavItem key={label} $active={label === "产品"}>
              <NavLink href="#">
                <Icon name={icon} size={21} stroke={1} />
                {label}
              </NavLink>
            </NavItem>
          ))}
        </NavList>
      </Nav>

      <Side>
        <Crumb>
          产品清单/<CrumbName>KFH1000</CrumbName>
          <Icon name="down" size={10} stroke={2.2} />
        </Crumb>
        <Menu>
          {menuItems.map(([icon, label]) => (
            <MenuItem key={label}>
              <Icon name={icon} stroke={1.4} />
              <MenuLink href="#" $active={label === "产品数据"}>
                {label}
              </MenuLink>
            </MenuItem>
          ))}
        </Menu>
        <SideTabs>
          <SideTab $active>最近访问</SideTab>
          <SideTab>我的收藏</SideTab>
        </SideTabs>
        <RecentArea>
          <RecentList>
            {recentItems.map(([kind, text]) => (
              <RecentItem key={text}>
                <RowIcon kind={kind} />
                <RecentLink href="#">{text}</RecentLink>
              </RecentItem>
            ))}
          </RecentList>
          <SideThumb />
        </RecentArea>
      </Side>

      <Main>
        <ActionBar>
          <ActionList>
            {actions.map(([icon, label]) => (
              <ActionButton key={label}>
                <Icon name={icon} stroke={1.3} />
                {label}
              </ActionButton>
            ))}
          </ActionList>
          <ActionMore>
            <MoreClip>
              <Icon name="person" />
            </MoreClip>
          </ActionMore>
        </ActionBar>

        <ItemHead>
          <Thumb>
            <BlueCube size={39} />
          </Thumb>
          <HeadText>
            <TitleRow>
              <Title>3101-000014</Title>
              <span>样机</span>
            </TitleRow>
            <Meta>
              <span>类型: 成品</span>
              <span>
                创建人:<MetaLink href="#">孙柏林(THB01)</MetaLink>
              </span>
              <span>创建时间: 2023–10–27 13:58:55</span>
              <span>
                所属产品:<MetaLink href="#">KFH1000</MetaLink>
              </span>
            </Meta>
          </HeadText>
          <Version>
            <VersionLabel htmlFor="version">版本：</VersionLabel>
            <SelectWrap>
              <Select id="version" defaultValue="A01 R000026">
                <option>A01 R000026</option>
              </Select>
              <SelectArrow>
                <Icon name="down" size={10} stroke={1.8} />
              </SelectArrow>
            </SelectWrap>
            <span>生效时间：</span>
            <VersionTime>2023-11-03 09:31:06</VersionTime>
          </Version>
        </ItemHead>

        <MainTabs>
          {mainTabs.map((tab) => (
            <MainTab key={tab} $active={tab === "BOM 6"}>
              {tab}
            </MainTab>
          ))}
        </MainTabs>

        <Panes>
          <Pane $grow={687}>
            <ToolBar canCopy solid="35%" />
            <DataGrid rows={leftRows} thumb="222px" />
            <GridFooter total="6/6" picked="1" />
          </Pane>

          <Pane $grow={772} $divided>
            <SubTabs>
              <SubTabList>
                {subTabs.map((tab) => (
                  <SubTab key={tab} $active={tab === "BOM7"}>
                    {tab}
                  </SubTab>
                ))}
              </SubTabList>
              <SubTabMore aria-label="更多标签">···</SubTabMore>
            </SubTabs>
            <ToolBar solid="90%" />
            <DataGrid rows={rightRows} showType thumb="285px" />
            <GridFooter total="7/7" picked="0" />
          </Pane>
        </Panes>
      </Main>

      <Rail>
        <RailGroup>
          {railTop.map(([icon, lines]) => (
            <RailEntry key={icon} icon={icon} lines={lines} />
          ))}
        </RailGroup>
        <RailTools>
          {railTools.map(([icon, lines]) => (
            <RailEntry key={icon} icon={icon} lines={lines} />
          ))}
        </RailTools>
        <RailCaret>
          <Triangle size={8} d="M1 5l6-5v10z" />
        </RailCaret>
      </Rail>
    </Body>
  </Shell>
);

export default App;
